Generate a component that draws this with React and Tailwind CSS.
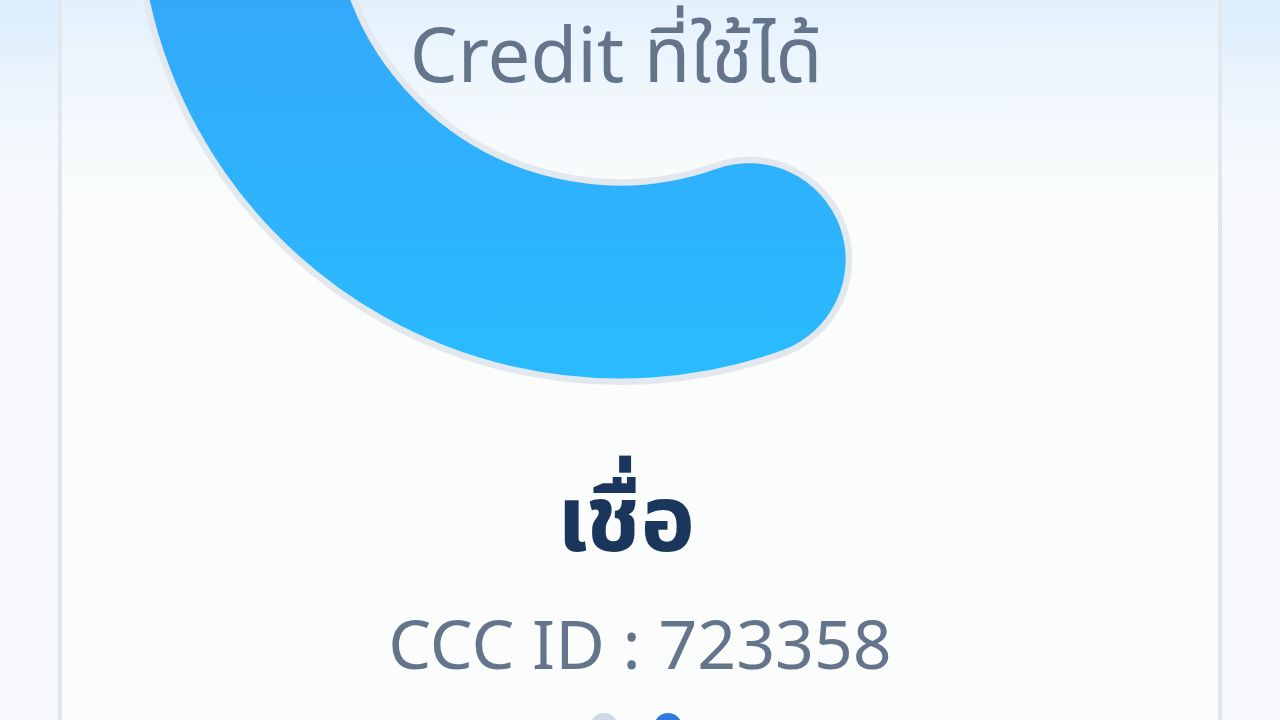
import React from "react";

function Gauge() {
  const cx = 620;
  const cy = -103;
  const r = 385;
  const a0 = (200 * Math.PI) / 180;
  const a1 = (70.4 * Math.PI) / 180;
  const x0 = cx + r * Math.cos(a0);
  const y0 = cy + r * Math.sin(a0);
  const x1 = cx + r * Math.cos(a1);
  const y1 = cy + r * Math.sin(a1);
  const d = `M ${x0} ${y0} A ${r} ${r} 0 0 0 ${x1} ${y1}`;
  return (
    <svg width="1156" height="392" viewBox="62 0 1156 392" className="block">
      <defs>
        <linearGradient id="g" x1="0" y1="0" x2="0" y2="390" gradientUnits="userSpaceOnUse">
          <stop offset="0" stopColor="#33a9fb" />
          <stop offset="1" stopColor="#29bcfe" />
        </linearGradient>
      </defs>
      <path d={d} fill="none" stroke="#e3e8ef" strokeWidth="206" strokeLinecap="round" />
      <path d={d} fill="none" stroke="url(#g)" strokeWidth="193" strokeLinecap="round" />
    </svg>
  );
}

export default function App() {
  return (
    <div className="h-[720px] w-[1280px] overflow-hidden bg-[linear-gradient(180deg,#dbedfc_0px,#eef6fd_110px,#f6f9fc_170px,#f8f9fc_260px)] px-[58px]">
      <div
        className="h-full border-x-4 border-[#e3e7ee] bg-[linear-gradient(180deg,#e3f1fd_0px,#eff7fd_90px,#f8fbfc_165px,#fbfcfc_230px)] flex flex-col items-center"
        style={{ fontFamily: '"Noto Sans", "Noto Sans Thai", "Open Sans", sans-serif' }}
      >
        <div className="relative w-full">
          <Gauge />
          <div className="absolute left-0 right-0 top-[15px] flex justify-center pr-[48px]">
            <span className="text-[76px] leading-none text-[#64748b]">Credit ที่ใช้ได้</span>
          </div>
        </div>
        <div className="mt-[78px] text-[92px] leading-none font-bold text-[#1b365d] pr-[28px]">เชื่อ</div>
        <div className="mt-[47px] text-[68px] leading-none text-[#64748b]">CCC ID : 723358</div>
        <div className="mt-[36px] flex gap-[36px] pr-[8px]">
          <span className="block h-[28px] w-[28px] rounded-full bg-[#cfd8e3]" />
          <span className="block h-[28px] w-[28px] rounded-full bg-[#2e7ae0]" />
        </div>
      </div>
    </div>
  );
}
